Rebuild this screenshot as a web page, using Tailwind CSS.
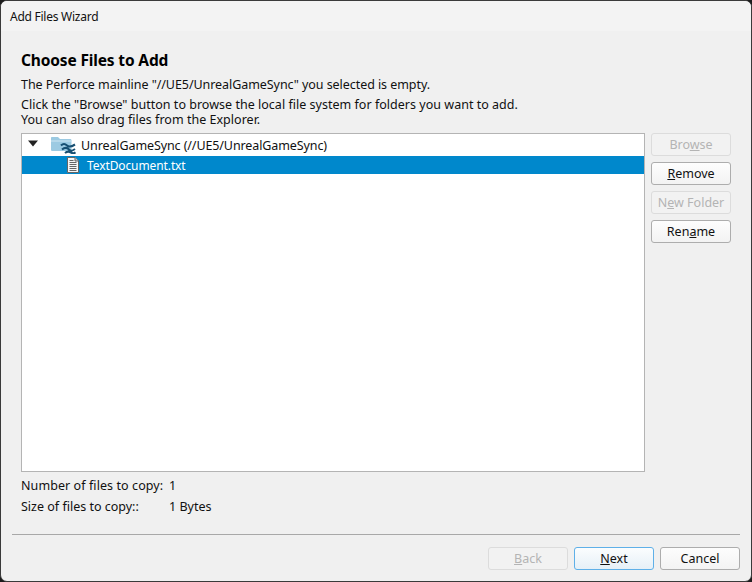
<!DOCTYPE html>
<html lang="en">
<head>
  <meta charset="UTF-8" />
  <title>Add Files Wizard</title>
  <script src="https://cdn.jsdelivr.net/npm/@tailwindcss/browser@4"></script>
</head>
<body class="bg-[#1c1c1c]">
  <div class="w-[752px] h-[582px] rounded-[7px] border border-[#3a3a3a] bg-[#f0f0f0] flex flex-col overflow-hidden font-['Noto_Sans',sans-serif] text-[12.5px] leading-[17px] text-[#111]">
    <div class="h-[30px] shrink-0 bg-[#f3f3f3] pl-[9px] pt-[7px] text-[12px] tracking-[-0.25px]">Add Files Wizard</div>

    <div class="flex-1 flex flex-col px-[20px] pt-[19px]">
      <h1 class="font-bold text-[15.5px] tracking-[-0.15px] leading-[21px] text-black">Choose Files to Add</h1>
      <p class="mt-[5px] tracking-[-0.06px]">The Perforce mainline "//UE5/UnrealGameSync" you selected is empty.</p>
      <p class="mt-[4px] leading-[15px] tracking-[0.02px]">Click the "Browse" button to browse the local file system for folders you want to add.<br />You can also drag files from the Explorer.</p>

      <div class="flex mt-[6px]">
        <div class="w-[624px] h-[339px] bg-white border border-[#b4b4b4]">
          <div class="h-[22px] flex items-center">
            <svg class="ml-[5px] mt-[-3px]" width="12" height="8" viewBox="0 0 12 8"><path d="M1 0.5H11L6 6.5Z" fill="#222" /></svg>
            <svg class="ml-[11px]" width="26" height="18" viewBox="0 0 26 18">
              <path d="M1 2C1 1.2 1.4 1 2 1H8L10 3H20C21 3 21.5 3.5 21.5 4.5V15H2.5C1.5 15 1 14.5 1 13.5Z" fill="#9ccae2" />
              <path d="M1 5H21.5" stroke="#cfe6f2" stroke-width="1" />
              <path d="M11 9.5C13 7.5 15 7.5 17 9.5S21 11 25 8.5M12 13.5C14.500 11.500 17 11.500 19 13.500S22 15 25 13M15 17C17 15.200 19 15.200 21 16.500S24 17.500 25.500 16.300" fill="none" stroke="#174f72" stroke-width="2.1" />
            </svg>
            <span class="ml-[5px] tracking-[-0.1px]">UnrealGameSync (//UE5/UnrealGameSync)</span>
          </div>
          <div class="h-[18px] bg-[#0088cc] flex items-center text-white">
            <svg class="ml-[45px]" width="12" height="16" viewBox="0 0 12 16">
              <path d="M0.5 0.5H8L11.5 4V15.5H0.5Z" fill="#f6f6f6" stroke="#666" />
              <path d="M8 0.5V4H11.5" fill="#ccc" stroke="#666" />
              <path d="M2.5 3.5H6.5M2.5 5.5H9.5M2.5 7.5H9.5M2.5 9.5H9.5M2.5 11.5H9.5M2.5 13.5H9.5" stroke="#666" stroke-width="1" />
            </svg>
            <span class="ml-[8px] text-[12px] tracking-[-0.1px]">TextDocument.txt</span>
          </div>
        </div>

        <div class="ml-[6px] w-[80px] flex flex-col gap-[6px]">
          <button class="h-[23px] rounded-[3px] border border-[#dcdcdc] bg-[#f2f2f2] text-[#b4b4b4]">Bro<span class="underline">w</span>se</button>
          <button class="h-[23px] rounded-[3px] border border-[#adadad] bg-gradient-to-b from-[#fdfdfd] to-[#f3f3f3]"><span class="underline">R</span>emove</button>
          <button class="h-[23px] rounded-[3px] border border-[#dcdcdc] bg-[#f2f2f2] text-[#b4b4b4]">N<span class="underline">e</span>w Folder</button>
          <button class="h-[23px] rounded-[3px] border border-[#adadad] bg-gradient-to-b from-[#fdfdfd] to-[#f3f3f3]">Ren<span class="underline">a</span>me</button>
        </div>
      </div>

      <div class="mt-[5px] grid grid-cols-[148px_1fr] gap-y-[4px]">
        <span class="tracking-[0.08px]">Number of files to copy:</span><span>1</span>
        <span>Size of files to copy::</span><span>1 Bytes</span>
      </div>
    </div>

    <div class="mx-[11px] border-t border-[#a8a8a8]"></div>
    <div class="h-[46px] shrink-0 flex justify-end items-start gap-[6px] pt-[12px] pr-[11px]">
      <button class="w-[80px] h-[23px] rounded-[3px] border border-[#dcdcdc] bg-[#f2f2f2] text-[#b4b4b4]"><span class="underline">B</span>ack</button>
      <button class="w-[80px] h-[23px] rounded-[3px] border border-[#5fb0e8] bg-gradient-to-b from-[#fbfdfe] to-[#e6f0f7]"><span class="underline">N</span>ext</button>
      <button class="w-[80px] h-[23px] rounded-[3px] border border-[#adadad] bg-gradient-to-b from-[#fdfdfd] to-[#f3f3f3]">Cancel</button>
    </div>
  </div>
</body>
</html>
